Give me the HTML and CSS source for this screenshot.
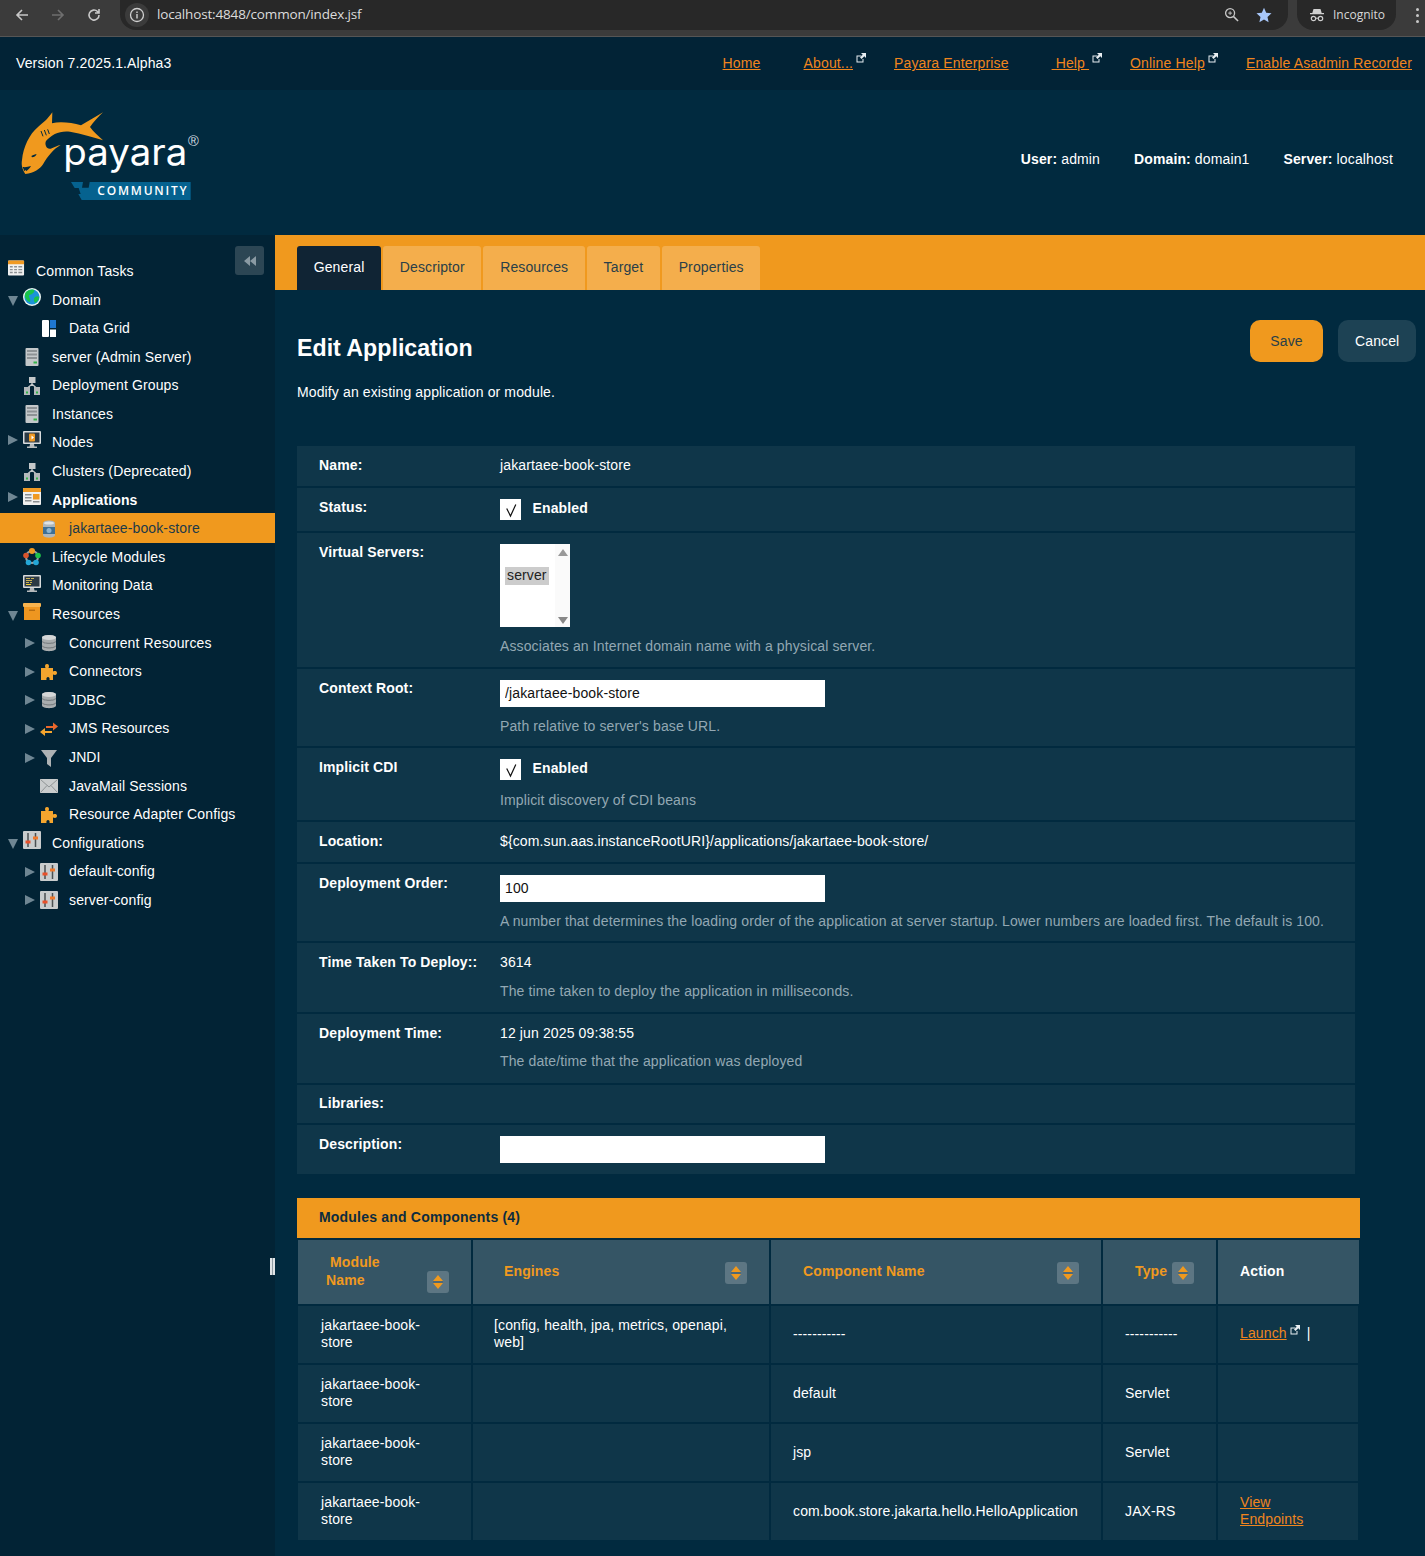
FILE: index.html
```html
<!DOCTYPE html>
<html lang="en">
<head>
    <meta charset="UTF-8">
    <meta name="viewport" content="width=device-width, initial-scale=1.0">
    <title>Payara Server Console - Edit Application</title>
    <link rel="stylesheet" href="styles.css">
</head>
<body>
    <!-- shared icons -->
    <svg class="icon-defs" aria-hidden="true">
        <symbol id="i-ext" viewBox="0 0 10 10"><path d="M.5 2.5h5v1h-4v5h5V6h1v3.5H.5z" fill="#e8eef2"/><path d="M5 0h5v5L8.3 3.3 5.6 6 4 4.4l2.7-2.7z" fill="#e8eef2"/></symbol>
        <symbol id="i-check" viewBox="0 0 21 21"><path d="M6.700 9.500l3.800 7.500 5.300-11.500" fill="none" stroke="#111" stroke-width="1.200"/></symbol>
        <symbol id="i-tasks" viewBox="0 0 18 18"><rect y="1" width="17" height="16" rx="1" fill="#f0f0f0"/><path d="M0 2a1 1 0 0 1 1-1h15a1 1 0 0 1 1 1v3H0z" fill="#f09a24"/><path d="M2 7h3v1.500H2zm4.500 0h3v1.500h-3zM11 7h4v1.500h-4zM2 10h3v1.500H2zm4.500 0h3v1.500h-3zM11 10h4v1.500h-4zM2 13h3v1.500H2zm4.500 0h3v1.500h-3zM11 13h4v1.500h-4z" fill="#8b8f92"/></symbol>
        <symbol id="i-globe" viewBox="0 0 18 18"><circle cx="9" cy="9" r="9" fill="#e9f4f2"/><circle cx="9" cy="9" r="7.600" fill="#1b93d8"/><path d="M3 4c2-2 6-3 8-2 1 2-1 3-2 4s-3 0-3 2 2 3 1 6c-2 0-4-3-5-5-.5-2 0-4 1-5zm9 5c2-1 3-1 4 0 0 3-2 5-4 6-1-2-2-4 0-6z" fill="#17c24a"/></symbol>
        <symbol id="i-grid" viewBox="0 0 18 18"><rect x="2" width="7" height="17" rx="1" fill="#fff"/><rect x="10" width="6" height="8" fill="#1f77d0"/><rect x="10" y="9.500" width="6" height="7.500" fill="#fff"/></symbol>
        <symbol id="i-server" viewBox="0 0 18 18"><rect x="2.500" width="13" height="18" rx="1" fill="#c4c8ca"/><path d="M4 2h10v2H4zm0 3.500h10v2H4zM4 9h10v2H4z" fill="#8d9295"/><rect x="10.500" y="13.500" width="3.500" height="2" fill="#35b54a"/></symbol>
        <symbol id="i-group" viewBox="0 0 18 18"><rect x="6" width="6.500" height="6" fill="#c4c8ca"/><path d="M9 6v3M4 11.500 9 7l5 4.500" stroke="#c4c8ca" stroke-width="1.300" fill="none"/><rect x="1" y="10" width="6" height="8" fill="#b4b9bb"/><rect x="11" y="10" width="6" height="8" fill="#b4b9bb"/><rect x="3" y="14.500" width="2" height="2" fill="#35b54a"/><rect x="13" y="14.500" width="2" height="2" fill="#35b54a"/></symbol>
        <symbol id="i-node" viewBox="0 0 18 18"><rect width="18" height="13" rx="1" fill="#d8dbdc"/><rect x="1.500" y="1.500" width="15" height="10" fill="#2c3a44"/><rect x="6" y="2.500" width="6" height="8" rx="1" fill="#f09a24"/><path d="M8.500 4.500 11 6.500l-2.500 2z" fill="#fff"/><path d="M7 13h4l.5 2.500H14V17H4v-1.500h2.500z" fill="#b6babc"/></symbol>
        <symbol id="i-apps" viewBox="0 0 18 18"><rect width="18" height="17" rx="1" fill="#f0f0f0"/><path d="M0 1a1 1 0 0 1 1-1h16a1 1 0 0 1 1 1v3H0z" fill="#f09a24"/><rect x="10" y="6" width="6.500" height="5.500" fill="#f09a24"/><path d="M2 6h6.500v1.500H2zm0 3h6.500v1.500H2zm0 3h6.500v1.500H2zm8 1h6.500v1.500H10z" fill="#8b8f92"/></symbol>
        <symbol id="i-jar" viewBox="0 0 18 18"><path d="M3 3c0-3.500 12-3.500 12 0v12c0 3.500-12 3.500-12 0z" fill="#aeb6bb"/><ellipse cx="9" cy="3" rx="5" ry="1.600" fill="#dfe3e5"/><rect x="3" y="7" width="12" height="7" fill="#3e6f94"/><circle cx="9" cy="10.500" r="2.500" fill="#8cb4d0"/></symbol>
        <symbol id="i-life" viewBox="0 0 18 18"><circle cx="9" cy="9" r="6" fill="none" stroke="#9aa0a3" stroke-width="2"/><circle cx="9" cy="3" r="3" fill="#f09a24"/><circle cx="15" cy="7.500" r="2.800" fill="#1fc24a"/><circle cx="13" cy="14.500" r="2.800" fill="#23a7d8"/><circle cx="5.500" cy="14.500" r="2.800" fill="#23a7d8"/><circle cx="3" cy="7.500" r="2.800" fill="#d9542b"/></symbol>
        <symbol id="i-mon" viewBox="0 0 18 18"><rect width="18" height="13" rx="1" fill="#d8dbdc"/><rect x="1.500" y="1.500" width="15" height="10" fill="#2c3a44"/><path d="M3 3h4v1H3zm5 0h3v1H8zM3 5h6v1H3zm0 2h3v1H3zm4 0h2v1H7z" fill="#c9b458"/><path d="M3 9h5v1H3z" fill="#f0d030"/><path d="M7 13h4l.5 2.500H14V17H4v-1.500h2.500z" fill="#b6babc"/></symbol>
        <symbol id="i-box" viewBox="0 0 18 18"><rect width="18" height="4" rx="1" fill="#f7b34e"/><rect x="1" y="4" width="16" height="13" fill="#ee9620"/><rect x="6" y="6.500" width="6" height="1.500" fill="#b96f12"/></symbol>
        <symbol id="i-db" viewBox="0 0 18 18"><path d="M2 3.500C2 0 16 0 16 3.500v11c0 3.500-14 3.500-14 0z" fill="#a9adaf"/><ellipse cx="9" cy="3.500" rx="7" ry="2.500" fill="#d5d7d8"/><path d="M2 6.500c1 3 13 3 14 0v1.200c-1 3-13 3-14 0zm0 4.500c1 3 13 3 14 0v1.200c-1 3-13 3-14 0z" fill="#7d8285"/></symbol>
        <symbol id="i-puzzle" viewBox="0 0 18 18"><path d="M1 5h4.500C4.500 3 5 1 7 1s2.500 2 1.500 4H13v3.500c2-1 4-.5 4 1.500s-2 2.500-4 1.500V17H9.500c.5-2-.5-3-1.500-3s-2 1-1.500 3H1z" fill="#f4a52e"/></symbol>
        <symbol id="i-arrows" viewBox="0 0 18 18"><path d="M6 6h7V2.500L18 6.500l-5 4V8H6z" fill="#e8672c"/><path d="M12 11H5V8L0 12l5 4v-3h7z" fill="#f4a52e"/></symbol>
        <symbol id="i-funnel" viewBox="0 0 18 18"><path d="M1 1h16l-6 8v9l-4-3V9z" fill="#aeb2b4"/></symbol>
        <symbol id="i-mail" viewBox="0 0 18 18"><rect y="2" width="18" height="14" fill="#c9cccd"/><path d="M.5 2.500 9 10l8.500-7.500M.5 15.500 7 8.500m10.500 7L11 8.500" fill="none" stroke="#8f9496" stroke-width="1"/></symbol>
        <symbol id="i-conf" viewBox="0 0 18 18"><rect width="18" height="18" rx="1" fill="#c9cccd"/><path d="M5 2v14M12.500 2v14" stroke="#4a4f52" stroke-width="1.500"/><rect x="2.500" y="9.500" width="5" height="3" fill="#e8502a"/><rect x="10" y="5.500" width="5" height="3" fill="#f0782a"/></symbol>
        <symbol id="i-sort" viewBox="0 0 22 22"><path d="M11 4l5 6H6zM6 12h10l-5 6z" fill="#f0991e"/><rect x="6" y="10.300" width="10" height="1.400" fill="#4a6472"/></symbol>
    </svg>

    <!-- browser chrome -->
    <div class="browser-bar">
        <div class="browser-row">
            <svg class="nav-ico" viewBox="0 0 16 16"><path d="M14 8H3M8 3 3 8l5 5" fill="none" stroke="#c8c8c8" stroke-width="1.600"/></svg>
            <svg class="nav-ico" viewBox="0 0 16 16"><path d="M2 8h11M8 3l5 5-5 5" fill="none" stroke="#6f6f6f" stroke-width="1.600"/></svg>
            <svg class="nav-ico" viewBox="0 0 16 16"><path d="M13 8a5 5 0 1 1-1.500-3.500L13 6M13 2v4H9" fill="none" stroke="#c8c8c8" stroke-width="1.600"/></svg>
            <div class="url-pill">
                <span class="site-info"><svg viewBox="0 0 16 16"><circle cx="8" cy="8" r="6.500" fill="none" stroke="#d0d0d0" stroke-width="1.300"/><path d="M7.300 7h1.400v4.500H7.300zm0-2.500h1.400V6H7.300z" fill="#d0d0d0"/></svg></span>
                <span class="url-text">localhost:4848/common/index.jsf</span>
                <svg class="url-zoom" viewBox="0 0 16 16"><circle cx="6.500" cy="6.500" r="4.800" fill="none" stroke="#c8c8c8" stroke-width="1.400"/><path d="M10 10l5 5" stroke="#c8c8c8" stroke-width="1.600"/><path d="M4.500 6.500h4M6.500 4.500v4" stroke="#c8c8c8"/></svg>
                <svg class="url-star" viewBox="0 0 16 16"><path d="M8 .8l2.200 4.900 5.300.6-4 3.600 1.100 5.300L8 12.500l-4.600 2.700 1.100-5.300-4-3.600 5.300-.6z" fill="#a8c7fa"/></svg>
            </div>
            <div class="incognito">
                <svg viewBox="0 0 16 16"><path d="M4.500 2h7l1.200 4H15v1.200H1V6h2.300z" fill="#d0d0d0"/><circle cx="4.500" cy="11.500" r="2.200" fill="none" stroke="#d0d0d0" stroke-width="1.200"/><circle cx="11.500" cy="11.500" r="2.200" fill="none" stroke="#d0d0d0" stroke-width="1.200"/><path d="M6.700 11.200h2.600" stroke="#d0d0d0"/></svg>
                <span>Incognito</span>
            </div>
            <div class="browser-menu"><i></i><i></i><i></i></div>
        </div>
        <div class="browser-strip"></div>
    </div>

    <header>
        <div class="top-nav">
            <span class="version">Version 7.2025.1.Alpha3</span>
            <nav class="top-links">
                <a href="#" class="wide">Home</a>
                <span class="ext-link"><a href="#">About...</a><svg class="ext"><use href="#i-ext"/></svg></span>
                <a href="#" class="wide">Payara Enterprise</a>
                <span class="ext-link"><a href="#">&nbsp;Help&nbsp;</a><svg class="ext"><use href="#i-ext"/></svg></span>
                <span class="ext-link"><a href="#">Online Help</a><svg class="ext"><use href="#i-ext"/></svg></span>
                <a href="#">Enable Asadmin Recorder</a>
            </nav>
        </div>
        <div class="masthead">
            <svg class="logo" viewBox="0 0 600 300" role="img" aria-label="Payara Community">
                <path d="M46 207C38 195 33 182 36 165 40 125 58 88 84 66 97 55 112 44 127 22L126 55C150 49 185 53 213 61 235 49 258 34 279 22 265 36 250 52 240 66 250 80 265 93 279 106 250 97 215 86 180 80 150 76 125 88 108 108 103 118 110 134 122 131 135 126 142 122 152 120 130 132 113 155 100 176 90 192 72 203 46 207Z" fill="#f0991e"/>
                <path d="M93 78l6 16M103 75l6 16M113 73l5 14" stroke="#012a3f" stroke-width="3"/>
                <path d="M64 153c6-3 11-5 16-5-3 6-8 9-14 9z" fill="#012a3f"/>
                <path d="M38 186c8 1 16 0 25-3-4 7-9 12-15 16l-1-5-4 5z" fill="#012a3f"/>
                <text x="160" y="180" class="logo-word" textLength="372" lengthAdjust="spacingAndGlyphs">payara</text>
                <text x="534" y="122" class="logo-reg">®</text>
                <path d="M183 231h36l-3 17h20l3-17h303v54H215l-10-18h7l-6-18h-12z" fill="#05628f"/>
                <text x="262" y="269" class="logo-sub" textLength="268">COMMUNITY</text>
            </svg>
            <div class="server-info">
                <span><b>User:</b> admin</span>
                <span><b>Domain:</b> domain1</span>
                <span><b>Server:</b> localhost</span>
            </div>
        </div>
    </header>

    <div class="layout">
        <aside class="sidebar">
            <button class="collapse-btn" aria-label="Collapse"><svg viewBox="0 0 12 10"><path d="M6 0v10L0 5zM12 0v10L6 5z" fill="#8a9aa3"/></svg></button>
            <div class="tree-row top-row"><svg class="ico raised"><use href="#i-tasks"/></svg><span>Common Tasks</span></div>
            <div class="tree-row"><i class="tog down"></i><svg class="ico raised"><use href="#i-globe"/></svg><span>Domain</span></div>
            <div class="tree-row sub"><i class="tog none"></i><svg class="ico"><use href="#i-grid"/></svg><span>Data Grid</span></div>
            <div class="tree-row"><i class="tog none"></i><svg class="ico"><use href="#i-server"/></svg><span>server (Admin Server)</span></div>
            <div class="tree-row"><i class="tog none"></i><svg class="ico"><use href="#i-group"/></svg><span>Deployment Groups</span></div>
            <div class="tree-row"><i class="tog none"></i><svg class="ico"><use href="#i-server"/></svg><span>Instances</span></div>
            <div class="tree-row"><i class="tog right raised"></i><svg class="ico raised"><use href="#i-node"/></svg><span>Nodes</span></div>
            <div class="tree-row"><i class="tog none"></i><svg class="ico"><use href="#i-group"/></svg><span>Clusters (Deprecated)</span></div>
            <div class="tree-row strong"><i class="tog right raised"></i><svg class="ico raised"><use href="#i-apps"/></svg><span>Applications</span></div>
            <div class="tree-row sub selected"><i class="tog none"></i><svg class="ico"><use href="#i-jar"/></svg><span>jakartaee-book-store</span></div>
            <div class="tree-row"><i class="tog none"></i><svg class="ico"><use href="#i-life"/></svg><span>Lifecycle Modules</span></div>
            <div class="tree-row"><i class="tog none"></i><svg class="ico raised-sm"><use href="#i-mon"/></svg><span>Monitoring Data</span></div>
            <div class="tree-row"><i class="tog down"></i><svg class="ico raised"><use href="#i-box"/></svg><span>Resources</span></div>
            <div class="tree-row sub"><i class="tog right"></i><svg class="ico"><use href="#i-db"/></svg><span>Concurrent Resources</span></div>
            <div class="tree-row sub"><i class="tog right"></i><svg class="ico"><use href="#i-puzzle"/></svg><span>Connectors</span></div>
            <div class="tree-row sub"><i class="tog right"></i><svg class="ico"><use href="#i-db"/></svg><span>JDBC</span></div>
            <div class="tree-row sub"><i class="tog right"></i><svg class="ico"><use href="#i-arrows"/></svg><span>JMS Resources</span></div>
            <div class="tree-row sub"><i class="tog right"></i><svg class="ico"><use href="#i-funnel"/></svg><span>JNDI</span></div>
            <div class="tree-row sub"><i class="tog none"></i><svg class="ico"><use href="#i-mail"/></svg><span>JavaMail Sessions</span></div>
            <div class="tree-row sub"><i class="tog none"></i><svg class="ico"><use href="#i-puzzle"/></svg><span>Resource Adapter Configs</span></div>
            <div class="tree-row"><i class="tog down"></i><svg class="ico raised"><use href="#i-conf"/></svg><span>Configurations</span></div>
            <div class="tree-row sub"><i class="tog right"></i><svg class="ico"><use href="#i-conf"/></svg><span>default-config</span></div>
            <div class="tree-row sub"><i class="tog right"></i><svg class="ico"><use href="#i-conf"/></svg><span>server-config</span></div>
            <div class="resize-handle"></div>
        </aside>

        <main>
            <div class="tabs">
                <a href="#" class="tab active">General</a>
                <a href="#" class="tab">Descriptor</a>
                <a href="#" class="tab">Resources</a>
                <a href="#" class="tab">Target</a>
                <a href="#" class="tab">Properties</a>
            </div>

            <div class="content">
                <div class="page-head">
                    <div>
                        <h1>Edit Application</h1>
                        <p class="subtitle">Modify an existing application or module.</p>
                    </div>
                    <div class="actions">
                        <button class="btn btn-save">Save</button>
                        <button class="btn btn-cancel">Cancel</button>
                    </div>
                </div>

                <div class="props">
                    <div class="prop-row">
                        <div class="prop-label">Name:</div>
                        <div class="prop-value">jakartaee-book-store</div>
                    </div>
                    <div class="prop-row prop-status">
                        <div class="prop-label">Status:</div>
                        <div class="prop-value"><label class="check"><span class="check-box"><svg><use href="#i-check"/></svg></span>Enabled</label></div>
                    </div>
                    <div class="prop-row">
                        <div class="prop-label">Virtual Servers:</div>
                        <div class="prop-value">
                            <div class="listbox">
                                <div class="list-body"><span class="list-option">server</span></div>
                                <div class="list-scroll"><i class="scroll-up"></i><i class="scroll-down"></i></div>
                            </div>
                            <p class="help">Associates an Internet domain name with a physical server.</p>
                        </div>
                    </div>
                    <div class="prop-row">
                        <div class="prop-label">Context Root:</div>
                        <div class="prop-value">
                            <input class="text-input" type="text" value="/jakartaee-book-store">
                            <p class="help">Path relative to server's base URL.</p>
                        </div>
                    </div>
                    <div class="prop-row">
                        <div class="prop-label">Implicit CDI</div>
                        <div class="prop-value">
                            <label class="check"><span class="check-box"><svg><use href="#i-check"/></svg></span>Enabled</label>
                            <p class="help help-loose">Implicit discovery of CDI beans</p>
                        </div>
                    </div>
                    <div class="prop-row">
                        <div class="prop-label">Location:</div>
                        <div class="prop-value">${com.sun.aas.instanceRootURI}/applications/jakartaee-book-store/</div>
                    </div>
                    <div class="prop-row">
                        <div class="prop-label">Deployment Order:</div>
                        <div class="prop-value">
                            <input class="text-input" type="text" value="100">
                            <p class="help">A number that determines the loading order of the application at server startup. Lower numbers are loaded first. The default is 100.</p>
                        </div>
                    </div>
                    <div class="prop-row">
                        <div class="prop-label">Time Taken To Deploy::</div>
                        <div class="prop-value">
                            3614
                            <p class="help help-loose2">The time taken to deploy the application in milliseconds.</p>
                        </div>
                    </div>
                    <div class="prop-row">
                        <div class="prop-label">Deployment Time:</div>
                        <div class="prop-value">
                            12 jun 2025 09:38:55
                            <p class="help help-last">The date/time that the application was deployed</p>
                        </div>
                    </div>
                    <div class="prop-row prop-short">
                        <div class="prop-label">Libraries:</div>
                        <div class="prop-value"></div>
                    </div>
                    <div class="prop-row prop-input-only">
                        <div class="prop-label">Description:</div>
                        <div class="prop-value"><input class="text-input" type="text"></div>
                    </div>
                </div>

                <div class="section-title">Modules and Components (4)</div>
                <table class="modules">
                    <colgroup>
                        <col class="col-module"><col class="col-engines"><col class="col-comp"><col class="col-type"><col class="col-action">
                    </colgroup>
                    <thead>
                        <tr>
                            <th class="th-module"><div class="th-inner"><span class="module-name">Module Name</span><span class="sort sort-low"><svg><use href="#i-sort"/></svg></span></div></th>
                            <th class="th-engines"><div class="th-inner"><span>Engines</span><span class="sort"><svg><use href="#i-sort"/></svg></span></div></th>
                            <th><div class="th-inner"><span>Component Name</span><span class="sort"><svg><use href="#i-sort"/></svg></span></div></th>
                            <th><div class="th-inner th-tight"><span>Type</span><span class="sort"><svg><use href="#i-sort"/></svg></span></div></th>
                            <th class="th-action">Action</th>
                        </tr>
                    </thead>
                    <tbody>
                        <tr>
                            <td>jakartaee-book-store</td>
                            <td>[config, health, jpa, metrics, openapi, web]</td>
                            <td>-----------</td>
                            <td>-----------</td>
                            <td class="cell-link"><a href="#">Launch</a><svg class="ext ext-cell"><use href="#i-ext"/></svg><span class="pipe">|</span></td>
                        </tr>
                        <tr>
                            <td>jakartaee-book-store</td>
                            <td></td>
                            <td>default</td>
                            <td>Servlet</td>
                            <td></td>
                        </tr>
                        <tr>
                            <td>jakartaee-book-store</td>
                            <td></td>
                            <td>jsp</td>
                            <td>Servlet</td>
                            <td></td>
                        </tr>
                        <tr>
                            <td>jakartaee-book-store</td>
                            <td></td>
                            <td>com.book.store.jakarta.hello.HelloApplication</td>
                            <td>JAX-RS</td>
                            <td class="cell-link"><a href="#">View<br>Endpoints</a></td>
                        </tr>
                    </tbody>
                </table>
            </div>
        </main>
    </div>
</body>
</html>
```

FILE: styles.css
```css
* {
    box-sizing: border-box;
}
html, body {
    margin: 0;
    padding: 0;
}
body {
    font-family: "Liberation Sans", Arial, sans-serif;
    font-size: 14px;
    line-height: 17px;
    letter-spacing: 0.125px;
    color: #fff;
    background: #012a3f;
    min-height: 100vh;
    display: flex;
    flex-direction: column;
    overflow: hidden;
}
a {
    color: #f0851e;
}
.icon-defs {
    display: none;
}

/* browser chrome */
.browser-bar {
    height: 37px;
    background: #3b3b3b;
    border-bottom: 1px solid #555;
    flex: none;
    letter-spacing: 0;
}
.browser-row {
    height: 30px;
    display: flex;
    align-items: center;
    padding-left: 14px;
}
.nav-ico {
    width: 16px;
    height: 16px;
    margin-right: 20px;
}
.url-pill {
    width: 1168px;
    height: 30px;
    margin-left: -2px;
    margin-top: -1px;
    background: #282828;
    border-radius: 0 0 16px 16px;
    display: flex;
    align-items: center;
    padding-left: 5px;
}
.site-info {
    width: 24px;
    height: 24px;
    border-radius: 50%;
    background: #3b3b3b;
    display: flex;
    align-items: center;
    justify-content: center;
}
.site-info svg {
    width: 16px;
    height: 16px;
}
.url-text {
    margin-left: 8px;
    color: #dcdcdc;
    font-family: "Open Sans", sans-serif;
    font-size: 13.500px;
    letter-spacing: -0.16px;
}
.url-zoom {
    width: 15px;
    height: 15px;
    margin-left: auto;
}
.url-star {
    width: 16px;
    height: 16px;
    margin-left: 17px;
    margin-right: 16px;
}
.incognito {
    width: 99px;
    height: 30px;
    margin-left: 9px;
    margin-top: -1px;
    background: #282828;
    border-radius: 0 0 16px 16px;
    display: flex;
    align-items: center;
    padding-left: 12px;
    color: #d8d8d8;
    font-family: "Open Sans", sans-serif;
    font-size: 12px;
}
.incognito svg {
    width: 16px;
    height: 16px;
    margin-right: 8px;
}
.browser-menu {
    margin-left: 20px;
    display: flex;
    flex-direction: column;
    gap: 3px;
}
.browser-menu i {
    width: 3px;
    height: 3px;
    border-radius: 50%;
    background: #c8c8c8;
}
.browser-strip {
    height: 6px;
}

/* header */
.top-nav {
    height: 53px;
    background: #022336;
    display: flex;
    align-items: center;
    justify-content: space-between;
    padding: 0 13px 0 16px;
}
.top-links {
    display: flex;
    align-items: center;
    gap: 28px;
    letter-spacing: 0.15px;
}
.top-links .wide {
    margin-right: 15px;
}
.ext-link {
    display: flex;
    align-items: center;
}
.ext {
    width: 10px;
    height: 10px;
    margin-left: 3px;
    margin-top: -12px;
}
.masthead {
    height: 145px;
    background: #012a3f;
    display: flex;
    align-items: center;
    justify-content: space-between;
    padding: 0 32px 0 10px;
}
.logo {
    width: 200px;
    height: 100px;
    margin-top: -15px;
    letter-spacing: 0;
}
.logo-word {
    font-family: "Inter", sans-serif;
    font-weight: 400;
    font-size: 108px;
    fill: #fff;
}
.logo-reg {
    font-family: "Liberation Sans", sans-serif;
    font-size: 44px;
    fill: #d6dde1;
}
.logo-sub {
    font-family: "Open Sans", sans-serif;
    font-weight: 600;
    font-size: 36px;
    fill: #fff;
}
.server-info {
    display: flex;
    gap: 34px;
    margin-top: -6px;
}

/* sidebar */
.layout {
    flex: 1;
    display: flex;
    min-height: 0;
}
.sidebar {
    position: relative;
    width: 275px;
    flex: none;
    background: #022335;
    padding-top: 22.120px;
}
.collapse-btn {
    position: absolute;
    left: 235px;
    top: 11px;
    width: 29px;
    height: 29px;
    border: none;
    border-radius: 3px;
    background: #2c4654;
    padding: 0;
    display: flex;
    align-items: center;
    justify-content: center;
}
.collapse-btn svg {
    width: 12px;
    height: 10px;
}
.resize-handle {
    position: absolute;
    left: 270px;
    top: 1023px;
    width: 5px;
    height: 17px;
    background: repeating-linear-gradient(90deg, #dfe4e7 0 2px, #8f9ca3 2px 3px);
}
.tree-row {
    height: 28.600px;
    display: flex;
    align-items: center;
    padding-left: 8px;
}
.tree-row.sub {
    padding-left: 25px;
}
.tree-row.top-row .ico {
    width: 17px;
}
.tree-row.strong {
    font-weight: bold;
}
.tree-row.selected {
    background: #f0991e;
    box-shadow: 0 -1px 0 #f0991e;
    color: #1c3a49;
}
.tog {
    width: 15px;
    height: 18px;
    flex: none;
    position: relative;
}
.tog::before {
    content: "";
    position: absolute;
    left: 0;
    top: 4px;
    border-style: solid;
    border-color: transparent;
}
.tog.right::before {
    border-width: 5px 0 5px 10px;
    border-left-color: #6f8693;
}
.tog.down::before {
    top: 5px;
    border-width: 10px 5px 0 5px;
    border-top-color: #6f8693;
}
.ico {
    width: 18px;
    height: 18px;
    flex: none;
    margin-right: 11px;
}
.ico.raised, .tog.raised {
    margin-bottom: 6px;
}
.ico.raised-sm {
    margin-bottom: 3px;
}

/* tabs */
main {
    flex: 1;
    min-width: 0;
}
.tabs {
    height: 55px;
    background: #f0991e;
    padding: 11px 0 0 22px;
    display: flex;
    gap: 2px;
}
.tab {
    display: block;
    height: 44px;
    padding: 13px 16.700px 0;
    border-radius: 3px 3px 0 0;
    background: #f4ae4c;
    color: #2a3f48;
    text-decoration: none;
}
.tab.active {
    background: #102434;
    color: #fff;
}

/* page */
.content {
    padding: 30px 9px 0 22px;
}
.page-head {
    display: flex;
    justify-content: space-between;
    align-items: flex-start;
    height: 126px;
}
h1 {
    margin: 14px 0 0;
    font-size: 23.200px;
    line-height: 28px;
    letter-spacing: 0;
    font-weight: bold;
}
.subtitle {
    margin: 22px 0 0;
}
.actions {
    display: flex;
    gap: 15px;
}
.btn {
    height: 42px;
    border: none;
    border-radius: 10px;
    font-family: inherit;
    font-size: 14px;
    padding: 0 17px;
    letter-spacing: inherit;
}
.btn-save {
    width: 73px;
    background: #f0991e;
    color: #2a3f48;
}
.btn-cancel {
    width: 78px;
    background: #1d4254;
    color: #fff;
}

/* properties */
.props {
    width: 1058px;
    display: flex;
    flex-direction: column;
    gap: 2px;
}
.prop-row {
    display: flex;
    background: #0f3649;
    padding: 11px 0 12px;
    min-height: 40px;
}
.prop-status {
    padding-bottom: 11px;
}
.prop-label {
    width: 203px;
    flex: none;
    padding-left: 22px;
    font-weight: bold;
}
.prop-value {
    flex: 1;
    min-width: 0;
}
.prop-short {
    padding: 10px 0 11px;
    min-height: 38px;
}
.prop-input-only {
    padding-bottom: 11px;
}
.help {
    margin: 10px 0 0;
    color: #93a8b3;
}
.listbox + .help {
    margin-top: 11px;
}
.text-input + .help {
    margin: 11px 0 -1px;
}
.help-loose {
    margin: 12px 0 -1px;
}
.help-loose2 {
    margin-top: 12px;
}
.help-last {
    margin: 11px 0 1px;
}
.check {
    display: flex;
    align-items: flex-start;
    font-weight: bold;
    line-height: 19px;
}
.check-box {
    width: 21px;
    height: 21px;
    margin-right: 11.500px;
    background: #fff;
}
.check-box svg {
    display: block;
    width: 21px;
    height: 21px;
}
.listbox {
    width: 70px;
    height: 83px;
    background: #fff;
    display: flex;
}
.list-body {
    flex: 1;
    padding: 23px 0 0 5px;
}
.list-option {
    display: block;
    width: 44px;
    height: 18px;
    background: #ccc;
    color: #222;
    padding-left: 2px;
    line-height: 16px;
}
.list-scroll {
    width: 15px;
    background: #fafafa;
    display: flex;
    flex-direction: column;
    justify-content: space-between;
    align-items: center;
    padding: 5px 0 3px;
}
.scroll-up, .scroll-down {
    border-style: solid;
    border-color: transparent;
}
.scroll-up {
    border-width: 0 5px 7px;
    border-bottom-color: #999;
}
.scroll-down {
    border-width: 7px 5px 0;
    border-top-color: #888;
}
.text-input {
    display: block;
    width: 325px;
    height: 27px;
    border: none;
    border-radius: 0;
    padding: 0 5px 2px;
    background: #fff;
    color: #111;
    font-family: inherit;
    font-size: 14px;
    letter-spacing: inherit;
}

/* modules table */
.section-title {
    width: 1063px;
    height: 40px;
    margin-top: 24px;
    padding: 11px 0 0 22px;
    background: #f0991e;
    color: #0d2c3f;
    font-weight: bold;
    letter-spacing: 0.2px;
}
.modules {
    margin-left: -1px;
    width: 1065px;
    table-layout: fixed;
    border-collapse: separate;
    border-spacing: 2px;
}
.col-module { width: 173px; }
.col-engines { width: 296px; }
.col-comp { width: 330px; }
.col-type { width: 113px; }
.col-action { width: 141px; }
.modules th {
    height: 64px;
    padding: 0 22px 2px 32px;
    background: #355565;
    color: #f0991e;
    text-align: left;
    font-weight: bold;
}
.modules th.th-module {
    padding-left: 28px;
}
.modules th.th-engines {
    padding-left: 31px;
}
.modules th.th-action {
    padding-left: 22px;
    color: #fff;
}
.th-inner {
    display: flex;
    align-items: center;
    justify-content: space-between;
}
.th-tight {
    justify-content: flex-start;
    gap: 5px;
}
.module-name {
    width: 60px;
    line-height: 18px;
    text-indent: 4px;
}
.sort {
    width: 22px;
    height: 22px;
    flex: none;
    margin-top: 4px;
    border-radius: 3px;
    background: #5d7683;
}
.sort svg {
    display: block;
    width: 22px;
    height: 22px;
}
.sort-low {
    align-self: flex-end;
    margin-top: 0;
    margin-bottom: -4px;
}
.modules td {
    height: 57px;
    padding: 0 22px;
    background: #0f3649;
    vertical-align: middle;
}
.modules td:first-child {
    padding: 0 22px 2px 23px;
}
.modules td:nth-child(2) {
    padding: 0 22px 2px 21px;
}
.modules td.cell-link {
    padding-bottom: 2px;
}
.modules td:last-child {
    border-right: 1px solid #012a3f;
}
.ext-cell {
    margin-left: 3px;
    margin-top: 0;
    position: relative;
    top: -3px;
}
.pipe {
    margin-left: 7px;
}
```
